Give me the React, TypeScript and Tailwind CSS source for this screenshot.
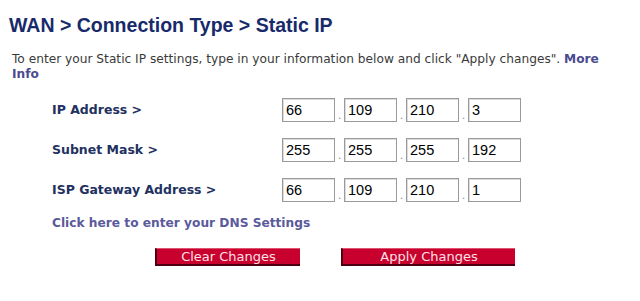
const rows = [
  { label: "IP Address >", values: ["66", "109", "210", "3"] },
  { label: "Subnet Mask >", values: ["255", "255", "255", "192"] },
  { label: "ISP Gateway Address >", values: ["66", "109", "210", "1"] },
];

const App = () => {
  return (
    <div className="w-[640px] h-[301px] bg-white overflow-hidden">
      <div className="pt-[13px] pl-[9px] pr-3">
        <h1 className="text-[19.5px] leading-[24px] font-bold text-[#182a6a] font-['Liberation_Sans',Arial,sans-serif]">
          WAN &gt; Connection Type &gt; Static IP
        </h1>
        <p className="mt-[15px] ml-[3px] w-[600px] text-[12.2px] leading-[15px] text-[#3a3a3a] font-['DejaVu_Sans',Verdana,sans-serif]">
          To enter your Static IP settings, type in your information below and
          click "Apply changes".{" "}
          <span className="font-bold text-[#4b4b8f]">More Info</span>
        </p>
        <div className="mt-[16px] ml-[43px] flex flex-col gap-[16px]">
          {rows.map((row) => (
            <div key={row.label} className="flex items-center h-[24px]">
              <div className="w-[230px] text-[12.5px] font-bold text-[#22315f] font-['DejaVu_Sans',Verdana,sans-serif]">
                {row.label}
              </div>
              <div className="flex items-end">
                {row.values.map((v, i) => (
                  <div key={i} className="flex items-end">
                    {i > 0 && (
                      <span className="w-[9px] text-center text-[10px] leading-[14px] text-[#888]">
                        .
                      </span>
                    )}
                    <div className="w-[53px] h-[24px] border border-[#9a9a9a] shadow-[inset_1px_1px_0_#dcdcdc] pl-[3px] text-[14.5px] leading-[22px] text-black font-['Liberation_Sans',Arial,sans-serif]">
                      {v}
                    </div>
                  </div>
                ))}
              </div>
            </div>
          ))}
        </div>
        <div className="mt-[12px] ml-[43px] text-[12.2px] font-bold text-[#5a5a9c] font-['DejaVu_Sans',Verdana,sans-serif]">
          Click here to enter your DNS Settings
        </div>
        <div className="mt-[16px] ml-[146px] flex gap-[41px]">
          <button className="w-[145px] h-[18px] bg-[#c8002e] border-b-2 border-l-2 border-[#4a0010] border-t border-t-[#e05070] text-[13px] leading-[14px] text-[#ffe0e6] font-['DejaVu_Sans',Verdana,sans-serif]">
            Clear Changes
          </button>
          <button className="w-[174px] h-[18px] bg-[#c8002e] border-b-2 border-l-2 border-[#4a0010] border-t border-t-[#e05070] text-[13px] leading-[14px] text-[#ffe0e6] font-['DejaVu_Sans',Verdana,sans-serif]">
            Apply Changes
          </button>
        </div>
      </div>
    </div>
  );
};

export default App;
